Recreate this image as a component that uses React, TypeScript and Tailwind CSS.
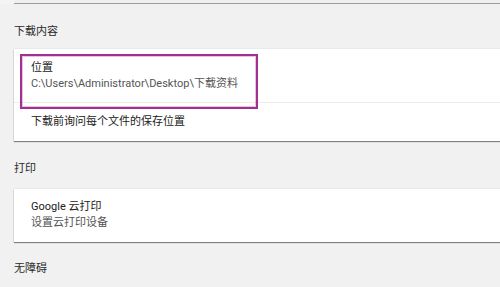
const font = { fontFamily: 'Roboto, "Noto Sans CJK SC", sans-serif' }

function Heading({ children }: { children: React.ReactNode }) {
  return <div className="h-[20px] leading-[20px] text-[11px] text-[#2a2a2a]">{children}</div>
}

function App() {
  return (
    <div
      className="w-[500px] h-[287px] overflow-hidden bg-[#f1f1f1] flex flex-col pl-[14px]"
      style={font}
    >
      {/* previous card end */}
      <div className="h-[4px] -ml-[14px] bg-[#f4f4f4] pl-[14px]">
        <div className="h-[4px] bg-[#f0f0f0] border-b border-[#9c9c9c]" />
      </div>

      <div className="mt-[18px]">
        <Heading>下载内容</Heading>
      </div>

      {/* download card */}
      <div className="relative mt-[7px] bg-white shadow-[0_1px_1px_rgba(0,0,0,0.45),0_0_1px_rgba(0,0,0,0.2)]">
        <div className="h-[54px] pl-[17px] pt-[11px] border-b border-[#ececec]">
          <div className="h-[16px] leading-[16px] text-[11px] text-[#222]">位置</div>
          <div className="h-[16px] leading-[16px] text-[11px] text-[#555]">
            C:\Users\Administrator\Desktop\下载资料
          </div>
        </div>
        <div className="h-[38px] pl-[17px] flex items-center text-[11px] text-[#222]">
          下载前询问每个文件的保存位置
        </div>
        {/* highlight annotation */}
        <div className="absolute left-[6px] top-[5px] w-[238px] h-[55px] border-[2px] border-[#a2308f] shadow-[inset_0_0_0_1px_rgba(220,150,210,0.6)]" />
      </div>

      <div className="mt-[18px]">
        <Heading>打印</Heading>
      </div>

      {/* print card */}
      <div className="mt-[10px] h-[53px] bg-white pl-[17px] pt-[10px] shadow-[0_1px_1px_rgba(0,0,0,0.45),0_0_1px_rgba(0,0,0,0.2)]">
        <div className="h-[16px] leading-[16px] text-[11px] text-[#222]">Google 云打印</div>
        <div className="h-[16px] leading-[16px] text-[11px] text-[#555]">设置云打印设备</div>
      </div>

      <div className="mt-[17px]">
        <Heading>无障碍</Heading>
      </div>
    </div>
  )
}

export default App
